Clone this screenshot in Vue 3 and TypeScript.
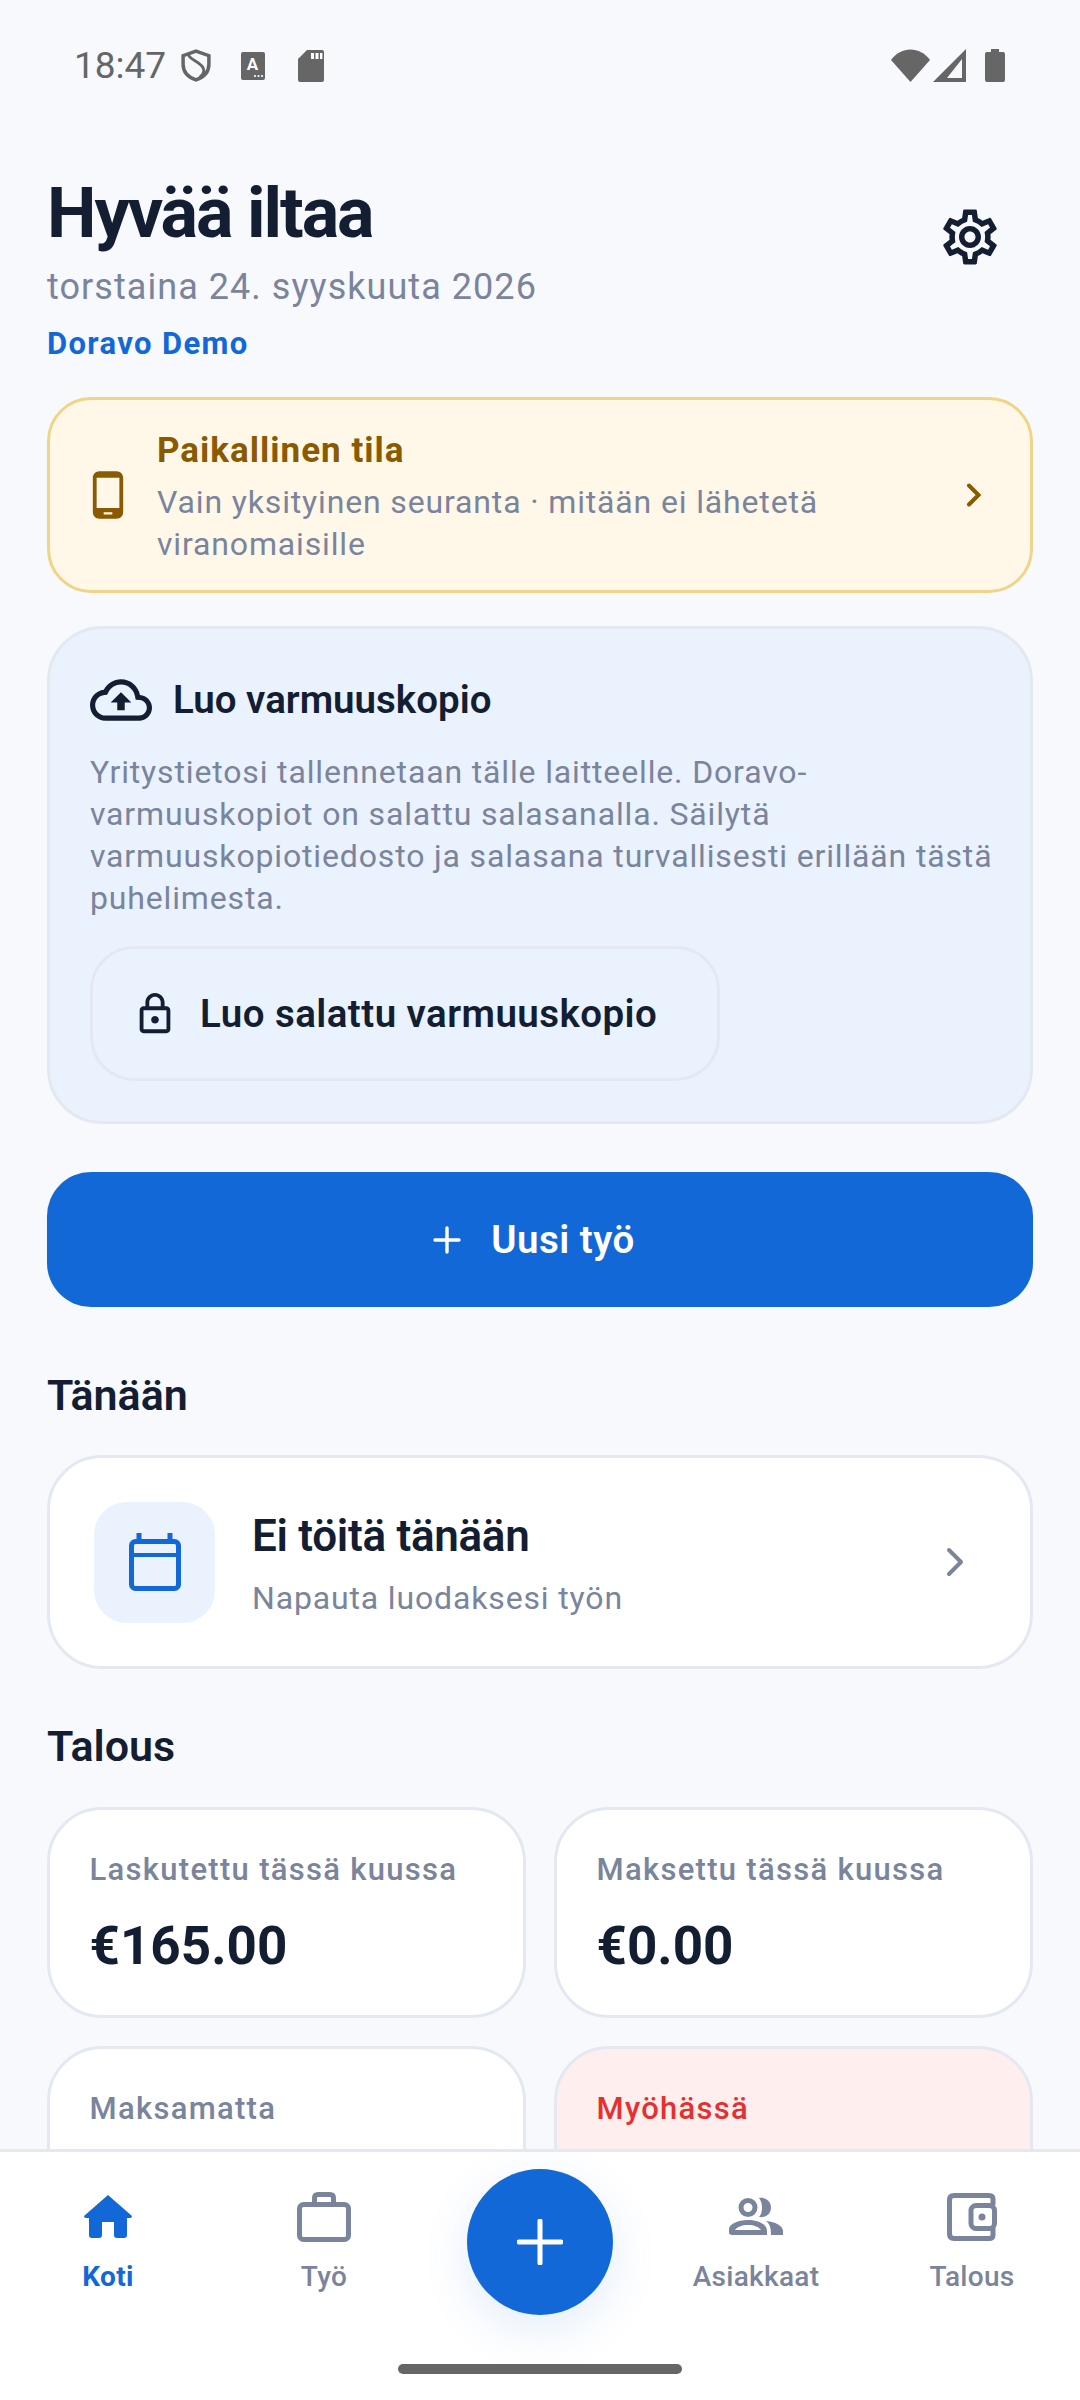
<script setup lang="ts">
// Talous kortit: kahden alimman kortin summat jäävät alapalkin alle
const stats = [
  { label: "Laskutettu tässä kuussa", value: "€165.00", late: false },
  { label: "Maksettu tässä kuussa", value: "€0.00", late: false },
  { label: "Maksamatta", value: "", late: false },
  { label: "Myöhässä", value: "", late: true },
];
</script>

<template>
  <div class="screen">
    <div class="status-bar">
      <div class="status-left">
        <span class="clock">18:47</span>
        <svg class="st-shield" viewBox="0 0 29 32" fill="none" stroke="#666" stroke-width="3.4">
          <path d="M14.5 2 L27 6.5 V15 C27 22.5 21.5 27.5 14.5 30 C7.5 27.5 2 22.5 2 15 V6.5 Z" />
          <path d="M7 5.5 C9 11 21 13 22 20 C22.5 23 20 26 18 27.5" stroke-width="2.8" />
        </svg>
        <svg class="st-a" viewBox="0 0 24 28">
          <rect width="24" height="28" rx="2" fill="#666" />
          <text x="11.500" y="18" text-anchor="middle" class="st-a-text">A</text>
          <circle cx="14" cy="24" r="1.1" fill="#fff" />
          <circle cx="17.500" cy="24" r="1.1" fill="#fff" />
          <circle cx="21" cy="24" r="1.1" fill="#fff" />
        </svg>
        <svg class="st-sd" viewBox="0 0 26 32">
          <path d="M9 0 H24 A2 2 0 0 1 26 2 V30 A2 2 0 0 1 24 32 H2 A2 2 0 0 1 0 30 V9 Z" fill="#666" />
          <path d="M13 3 h3 v6 h-3 z M17.500 3 h3 v6 h-3 z M22 3 h2.400 v6 H22 z" fill="#fff" />
        </svg>
      </div>
      <div class="status-right">
        <svg class="st-wifi" viewBox="0 0 39 33"><path d="M0 11 C10 -3 29 -3 39 11 L19.500 33 Z" fill="#666" /></svg>
        <svg class="st-signal" viewBox="0 0 33 33">
          <path fill-rule="evenodd" d="M33 0 V33 H0 Z M29 10 L14 29 H29 Z" fill="#666" />
        </svg>
        <svg class="st-battery" viewBox="0 0 20 33">
          <path d="M6 0 H14 V3 H18 A2 2 0 0 1 20 5 V31 A2 2 0 0 1 18 33 H2 A2 2 0 0 1 0 31 V5 A2 2 0 0 1 2 3 H6 Z" fill="#666" />
        </svg>
      </div>
    </div>

    <main class="content">
      <!-- Otsikko -->
      <header class="head">
        <div>
          <h1>Hyvää iltaa</h1>
          <p class="date">torstaina 24. syyskuuta 2026</p>
          <p class="company">Doravo Demo</p>
        </div>
        <svg class="gear" viewBox="0 0 24 24">
          <path d="M19.43 12.98c.04-.32.07-.64.07-.98 0-.34-.03-.66-.07-.98l2.11-1.65c.19-.15.24-.42.12-.64l-2-3.46c-.09-.16-.26-.25-.44-.25-.06 0-.12.01-.17.03l-2.49 1c-.52-.4-1.08-.73-1.69-.98l-.38-2.65C14.46 2.18 14.25 2 14 2h-4c-.25 0-.46.18-.49.42l-.38 2.65c-.61.25-1.17.59-1.69.98l-2.49-1c-.06-.02-.12-.03-.18-.03-.17 0-.34.09-.43.25l-2 3.46c-.13.22-.07.49.12.64l2.11 1.65c-.04.32-.07.65-.07.98 0 .33.03.66.07.98l-2.11 1.65c-.19.15-.24.42-.12.64l2 3.46c.09.16.26.25.44.25.06 0 .12-.01.17-.03l2.49-1c.52.4 1.08.73 1.69.98l.38 2.65c.03.24.24.42.49.42h4c.25 0 .46-.18.49-.42l.38-2.65c.61-.25 1.17-.59 1.69-.98l2.49 1c.06.02.12.03.18.03.17 0 .34-.09.43-.25l2-3.46c.12-.22.07-.49-.12-.64l-2.11-1.65zm-1.98-1.71c.04.31.05.52.05.73 0 .21-.02.43-.05.73l-.14 1.13.89.7 1.08.84-.7 1.21-1.27-.51-1.04-.42-.9.68c-.43.32-.84.56-1.25.73l-1.06.43-.16 1.13-.2 1.35h-1.4l-.19-1.35-.16-1.13-1.06-.43c-.43-.18-.83-.41-1.23-.71l-.91-.7-1.06.43-1.27.51-.7-1.21 1.08-.84.89-.7-.14-1.13c-.03-.31-.05-.54-.05-.74s.02-.43.05-.73l.14-1.13-.89-.7-1.08-.84.7-1.21 1.27.51 1.04.42.9-.68c.43-.32.84-.56 1.25-.73l1.06-.43.16-1.13.2-1.35h1.39l.19 1.35.16 1.13 1.06.43c.43.18.83.41 1.23.71l.91.7 1.06-.43 1.27-.51.7 1.21-1.07.85-.89.7.14 1.13zM12 8c-2.21 0-4 1.79-4 4s1.79 4 4 4 4-1.79 4-4-1.79-4-4-4zm0 6c-1.1 0-2-.9-2-2s.9-2 2-2 2 .9 2 2-.9 2-2 2z" fill="#141e33" />
        </svg>
      </header>

      <!-- Paikallinen tila -->
      <div class="local-card">
        <svg class="local-icon" viewBox="0 0 24 24">
          <path d="M16 1H8C6.34 1 5 2.34 5 4v16c0 1.66 1.34 3 3 3h8c1.66 0 3-1.34 3-3V4c0-1.66-1.34-3-3-3zm-2 20h-4v-1h4v1zm3.25-3H6.75V4h10.5v14z" fill="#8a5a00" />
        </svg>
        <div class="local-text">
          <div class="local-title">Paikallinen tila</div>
          <div class="muted">Vain yksityinen seuranta · mitään ei lähetetä viranomaisille</div>
        </div>
        <svg class="local-chevron" viewBox="0 0 16 24" fill="none" stroke="#8a5a00" stroke-width="4" stroke-linecap="round" stroke-linejoin="miter">
          <path d="M3 2.500 L12.500 12 L3 21.500" />
        </svg>
      </div>

      <!-- Varmuuskopio -->
      <section class="backup-card">
        <div class="backup-head">
          <svg class="cloud" viewBox="0 0 24 24">
            <path d="M19.35 10.04C18.67 6.59 15.64 4 12 4 9.11 4 6.6 5.64 5.35 8.04 2.34 8.36 0 10.91 0 14c0 3.31 2.69 6 6 6h13c2.76 0 5-2.24 5-5 0-2.64-2.05-4.78-4.65-4.96zM19 18H6c-2.21 0-4-1.79-4-4 0-2.05 1.53-3.76 3.56-3.97l1.07-.11.5-.95C8.08 7.14 9.94 6 12 6c2.62 0 4.88 1.86 5.39 4.43l.3 1.5 1.53.11c1.56.1 2.78 1.41 2.78 2.96 0 1.65-1.35 3-3 3zM8 13h2.55v3h2.9v-3H16l-4-4z" fill="#141e33" />
          </svg>
          <h3>Luo varmuuskopio</h3>
        </div>
        <p class="muted backup-text">Yritystietosi tallennetaan tälle laitteelle. Doravo-varmuuskopiot on salattu salasanalla. Säilytä varmuuskopiotiedosto ja salasana turvallisesti erillään tästä puhelimesta.</p>
        <button class="backup-btn">
          <svg class="lock" viewBox="0 0 24 24">
            <path d="M18 8h-1V6c0-2.76-2.24-5-5-5S7 3.24 7 6v2H6c-1.1 0-2 .9-2 2v10c0 1.1.9 2 2 2h12c1.1 0 2-.9 2-2V10c0-1.1-.9-2-2-2zM9 6c0-1.66 1.34-3 3-3s3 1.34 3 3v2H9V6zm9 14H6V10h12v10zm-6-3c1.1 0 2-.9 2-2s-.9-2-2-2-2 .9-2 2 .9 2 2 2z" fill="#141e33" />
          </svg>
          Luo salattu varmuuskopio
        </button>
      </section>

      <button class="new-job">
        <svg class="plus-small" viewBox="0 0 28 28" stroke="#fff" stroke-width="3.4" stroke-linecap="round">
          <path d="M14 2 V26 M2 14 H26" />
        </svg>
        Uusi työ
      </button>

      <h2 class="section today-title">Tänään</h2>
      <div class="today-card">
        <div class="cal-box">
          <svg class="cal" viewBox="0 0 52 58" fill="none" stroke="#1368d8" stroke-width="5">
            <rect x="2.500" y="8.500" width="47" height="47" rx="4" />
            <path d="M2 22 H50" stroke-width="4" />
            <path d="M10 0 V8 M41 0 V8" />
          </svg>
        </div>
        <div class="today-text">
          <div class="today-title-text">Ei töitä tänään</div>
          <div class="muted today-sub">Napauta luodaksesi työn</div>
        </div>
        <svg class="today-chevron" viewBox="0 0 18 30" fill="none" stroke="#7a849c" stroke-width="4" stroke-linecap="round" stroke-linejoin="round">
          <path d="M3 3 L15 15 L3 27" />
        </svg>
      </div>

      <h2 class="section talous-title">Talous</h2>
      <div class="stats">
        <div v-for="s in stats" :key="s.label" class="stat" :class="{ late: s.late }">
          <div class="stat-label">{{ s.label }}</div>
          <div v-if="s.value" class="stat-value">{{ s.value }}</div>
        </div>
      </div>
    </main>

    <nav class="nav">
      <div class="nav-item active">
        <svg viewBox="-3 -3 54 50"><path d="M24 0 L48 21 Q48 23 46 23 H43 V40 Q43 43 40 43 H33 Q30 43 30 40 V27 H18 V40 Q18 43 15 43 H8 Q5 43 5 40 V23 H2 Q0 23 0 21 Z" fill="#1368d8" /></svg>
        <span>Koti</span>
      </div>
      <div class="nav-item">
        <svg viewBox="0 0 54 50" fill="none" stroke="#7a849c" stroke-width="5">
          <rect x="2.500" y="12.500" width="49" height="35" rx="4" />
          <path d="M17.500 12 V6 Q17.500 2.500 21 2.500 H33 Q36.500 2.500 36.500 6 V12" />
        </svg>
        <span>Työ</span>
      </div>
      <div class="nav-item">
        <button class="fab">
          <svg viewBox="0 0 46 46" stroke="#fff" stroke-width="5" stroke-linecap="round"><path d="M23 2 V44 M2 23 H44" /></svg>
        </button>
      </div>
      <div class="nav-item">
        <svg viewBox="0 0 54 38">
          <path fill-rule="evenodd" fill="#7a849c" d="M19 0 a9.500 9.500 0 1 1 0 19 a9.500 9.500 0 1 1 0 -19 z M19 5 a4.500 4.500 0 1 0 0 9 a4.500 4.500 0 1 0 0 -9 z" />
          <path fill="#7a849c" d="M30 0 C38 -1 42 4 42 9.500 C42 15 38 20 30 19 C34 15 34 5 30 0 z" />
          <path fill-rule="evenodd" fill="#7a849c" d="M0 31 C0 26 9 22 19 22 C29 22 38 26 38 33 V37 H3 Q0 37 0 34 z M6 32 H32 C30 29 25 27 19 27 C13 27 8 29 6 32 z" />
          <path fill="#7a849c" d="M37 23 C47 24 54 28 54 33 V37 H42 C42 30 41 26 37 23 z" />
        </svg>
        <span>Asiakkaat</span>
      </div>
      <div class="nav-item">
        <svg viewBox="-2 -1 54 50" fill="none" stroke="#7a849c" stroke-width="5">
          <path d="M46 12 V6 Q46 2.500 42 2.500 H7 Q2.500 2.500 2.500 7 V41 Q2.500 45.500 7 45.500 H42 Q46 45.500 46 42 V35" />
          <rect x="24" y="12.500" width="23.500" height="23" rx="5" />
          <circle cx="35" cy="24" r="3.500" fill="#7a849c" stroke="none" />
        </svg>
        <span>Talous</span>
      </div>
      <div class="home-pill"></div>
    </nav>
  </div>
</template>

<style>
html,
body {
  margin: 0;
  background: #f7f9fd;
}
</style>

<style scoped>
.screen {
  width: 1080px;
  height: 2400px;
  display: flex;
  flex-direction: column;
  overflow: hidden;
  background: #f7f9fd;
  font-family: Roboto, "Noto Sans", sans-serif;
  color: #141e33;
}

.status-bar {
  height: 132px;
  flex: none;
  box-sizing: border-box;
  padding: 49px 75px 0;
  display: flex;
  justify-content: space-between;
  align-items: flex-start;
}

.status-left,
.status-right {
  display: flex;
  align-items: center;
  height: 33px;
}

.clock {
  font-size: 37px;
  color: #666;
  line-height: 36px;
  width: 107px;
  margin-left: -1px;
}

.st-shield { width: 30px; height: 33px; margin-right: 30px; }
.st-a { width: 24px; height: 28px; margin-right: 33px; }
.st-a-text { font-size: 17px; font-weight: 700; fill: #fff; font-family: Roboto, sans-serif; }
.st-sd { width: 26px; height: 32px; }
.st-wifi { width: 39px; height: 33px; margin-right: 3px; }
.st-signal { width: 33px; height: 33px; margin-right: 19px; }
.st-battery { width: 20px; height: 33px; }

.content {
  flex: 1;
  min-height: 0;
  overflow: hidden;
  padding: 0 47px;
}

.head {
  display: flex;
  justify-content: space-between;
  align-items: flex-start;
  padding: 39px 30px 0 0;
  height: 265px;
  box-sizing: border-box;
}

h1 {
  margin: 0;
  font-size: 70px;
  line-height: 84px;
  font-weight: 700;
  letter-spacing: -2px;
}

.date {
  margin: 9px 0 0;
  font-size: 36px;
  line-height: 46px;
  letter-spacing: 1.05px;
  color: #7a849c;
}

.company {
  margin: 14px 0 0;
  font-size: 31px;
  line-height: 40px;
  font-weight: 700;
  letter-spacing: 1.35px;
  color: #1368d8;
}

.gear {
  width: 66px;
  height: 66px;
  margin-top: 33px;
}

.muted {
  font-size: 32px;
  line-height: 42px;
  letter-spacing: 0.85px;
  color: #7a849c;
}

.local-card {
  height: 196px;
  box-sizing: border-box;
  display: flex;
  align-items: center;
  background: #fff8e8;
  border: 3px solid #f0d488;
  border-radius: 44px;
  padding: 0 48px 0 32px;
}

.local-icon {
  width: 52px;
  height: 52px;
  flex: none;
  margin-right: 23px;
}

.local-text {
  flex: 1;
  padding-top: 2px;
}

.local-title {
  font-size: 35px;
  line-height: 46px;
  font-weight: 700;
  letter-spacing: 1px;
  margin-bottom: 7px;
  color: #8a5a00;
}

.local-chevron {
  width: 16px;
  height: 24px;
  flex: none;
}

.backup-card {
  margin-top: 33px;
  height: 498px;
  box-sizing: border-box;
  background: #eaf2fe;
  border: 3px solid #e4e9f1;
  border-radius: 55px;
  padding: 40px 36px 0 40px;
}

.backup-head {
  display: flex;
  align-items: center;
  gap: 21px;
  height: 62px;
}

.cloud {
  width: 62px;
  height: 62px;
}

h3 {
  margin: 0;
  padding-bottom: 2px;
  font-size: 38.5px;
  font-weight: 600;
}

.backup-text {
  margin: 20px 0 0;
}

.backup-btn {
  margin-top: 27px;
  width: 630px;
  height: 135px;
  box-sizing: border-box;
  display: flex;
  align-items: center;
  background: transparent;
  border: 3px solid #e4e9f1;
  border-radius: 44px;
  padding: 0 0 0 39px;
  font-family: inherit;
  font-size: 38.5px;
  font-weight: 600;
  letter-spacing: 0.45px;
  color: #141e33;
}

.lock {
  width: 46px;
  height: 46px;
  margin-right: 22px;
}

.new-job {
  margin-top: 48px;
  width: 100%;
  height: 135px;
  display: flex;
  align-items: center;
  justify-content: center;
  gap: 30px;
  background: #1368d8;
  border: none;
  border-radius: 44px;
  font-family: inherit;
  font-size: 38.5px;
  font-weight: 600;
  letter-spacing: 0.5px;
  color: #fff;
  padding: 0 12px 0 0;
}

.plus-small {
  width: 28px;
  height: 28px;
}

.section {
  margin: 0;
  font-size: 43px;
  line-height: 50px;
  font-weight: 600;
}

.today-title {
  margin-top: 63px;
  margin-bottom: 35px;
}

.today-card {
  height: 214px;
  box-sizing: border-box;
  display: flex;
  align-items: center;
  background: #fff;
  border: 3px solid #e4e9f1;
  border-radius: 55px;
  padding: 0 66px 0 44px;
}

.cal-box {
  width: 121px;
  height: 121px;
  flex: none;
  display: flex;
  align-items: center;
  justify-content: center;
  background: #eaf2fe;
  border-radius: 33px;
  margin-right: 37px;
}

.cal {
  width: 52px;
  height: 58px;
}

.today-text {
  flex: 1;
  padding-top: 4px;
}

.today-title-text {
  font-size: 44px;
  line-height: 52px;
  font-weight: 600;
  letter-spacing: -0.3px;
}

.today-sub {
  margin-top: 15px;
}

.today-chevron {
  width: 18px;
  height: 30px;
  flex: none;
}

.talous-title {
  margin-top: 52px;
  margin-bottom: 36px;
}

.stats {
  display: grid;
  grid-template-columns: 1fr 1fr;
  gap: 28px;
}

.stat {
  height: 211px;
  box-sizing: border-box;
  background: #fff;
  border: 3px solid #e4e9f1;
  border-radius: 55px;
  padding: 39px 38px 0 39.5px;
}

.stat.late {
  background: #feeeee;
}

.stat-label {
  font-size: 31px;
  line-height: 42px;
  font-weight: 500;
  letter-spacing: 1.3px;
  color: #7a849c;
}

.stat.late .stat-label {
  color: #e53030;
}

.stat-value {
  margin-top: 23px;
  font-size: 53px;
  line-height: 64px;
  font-weight: 700;
}

.nav {
  position: relative;
  flex: none;
  height: 251px;
  box-sizing: border-box;
  display: grid;
  grid-template-columns: repeat(5, 1fr);
  background: #fff;
  border-top: 3px solid #e4e9f1;
  padding-top: 40px;
}

.nav-item {
  display: flex;
  flex-direction: column;
  align-items: center;
  font-size: 28px;
  line-height: 36px;
  font-weight: 500;
  letter-spacing: 0.3px;
  color: #7a849c;
}

.nav-item svg {
  width: 54px;
  height: 50px;
}

.nav-item span {
  margin-top: 17px;
}

.nav-item.active {
  color: #1368d8;
  font-weight: 700;
}

.fab {
  position: absolute;
  top: 17px;
  left: 467px;
  width: 146px;
  height: 146px;
  border: none;
  border-radius: 50%;
  background: #1368d8;
  box-shadow: 0 14px 48px rgba(19, 104, 216, 0.12);
  display: flex;
  align-items: center;
  justify-content: center;
  padding: 0;
}

.nav-item .fab svg {
  width: 46px;
  height: 46px;
}

.home-pill {
  position: absolute;
  left: 398px;
  top: 212px;
  width: 284px;
  height: 10px;
  border-radius: 5px;
  background: #666;
}
</style>
